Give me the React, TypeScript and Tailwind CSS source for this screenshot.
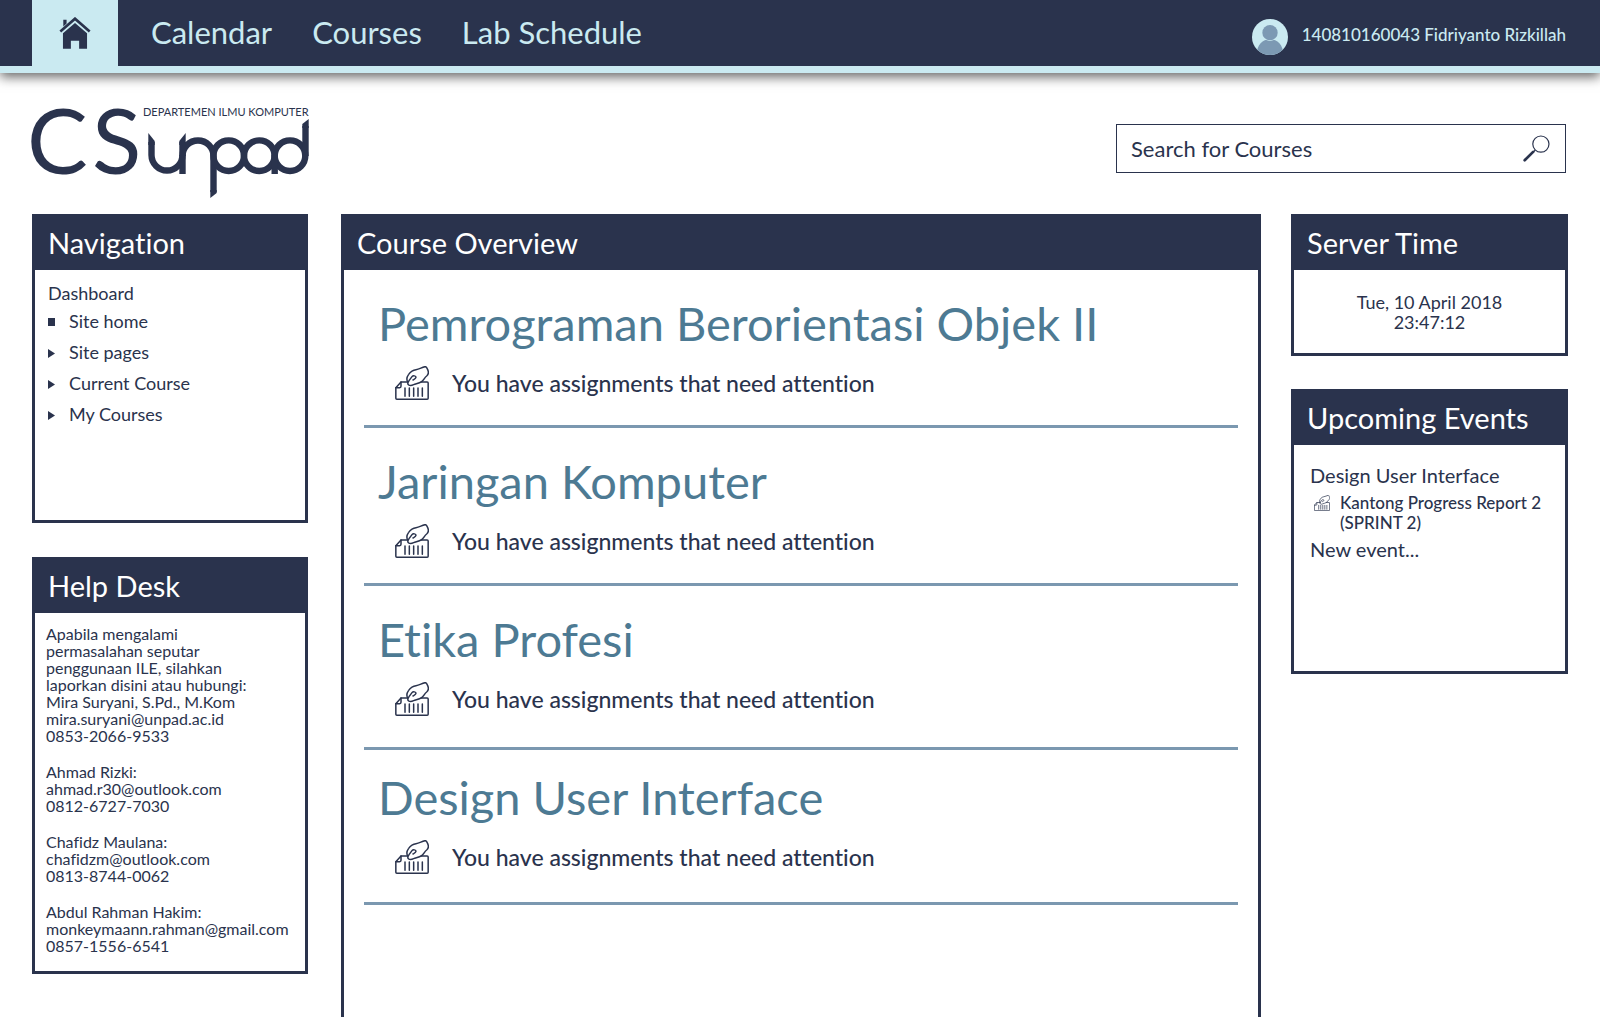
import React from "react";

type Children = { children: React.ReactNode };

const courses = [
  { name: "Pemrograman Berorientasi Objek II", spacing: "pt-[25px] pb-[25px]" },
  { name: "Jaringan Komputer", spacing: "pt-[25px] pb-[25px]" },
  { name: "Etika Profesi", spacing: "pt-[25px] pb-[31px]" },
  { name: "Design User Interface", spacing: "pt-[19px] pb-7" },
];

const contacts = [
  { name: "Ahmad Rizki:", email: "ahmad.r30@outlook.com", phone: "0812-6727-7030" },
  { name: "Chafidz Maulana:", email: "chafidzm@outlook.com", phone: "0813-8744-0062" },
  { name: "Abdul Rahman Hakim:", email: "monkeymaann.rahman@gmail.com", phone: "0857-1556-6541" },
];

function HomeIcon() {
  return (
    <svg viewBox="0 0 95 97" className="h-8 w-8" fill="currentColor" aria-hidden="true">
      <path d="M12 8h10v12l-10 9z" />
      <path d="M3 44 47.500 5 92 44" fill="none" stroke="currentColor" strokeWidth="8" />
      <path d="M11 96V49L47.500 18 84 49v47H60V72H35v24z" />
    </svg>
  );
}

function Avatar() {
  return (
    <svg viewBox="0 0 108 108" className="h-9 w-9" aria-hidden="true">
      <clipPath id="avatar-clip">
        <circle cx="54" cy="54" r="54" />
      </clipPath>
      <g clipPath="url(#avatar-clip)">
        <rect width="108" height="108" fill="#caeaf1" />
        <path d="M14 108C14 78 32 61 54 61s40 17 40 47z" fill="#7c99b3" />
        <circle cx="54" cy="41" r="25" fill="#caeaf1" />
        <circle cx="54" cy="41" r="23" fill="#7c99b3" />
      </g>
    </svg>
  );
}

function SearchIcon() {
  return (
    <svg viewBox="0 0 80 80" className="h-[27px] w-[27px]" fill="none" stroke="currentColor" aria-hidden="true">
      <circle cx="53" cy="27" r="24" strokeWidth="3.500" />
      <path d="M36 45 28 53" strokeWidth="4" />
      <path d="M30 50 5 75" strokeWidth="8" strokeLinecap="round" />
    </svg>
  );
}

function AssignmentIcon({ className }: { className: string }) {
  return (
    <svg
      viewBox="0 0 102 102"
      className={className}
      fill="none"
      stroke="currentColor"
      strokeWidth="4.500"
      strokeLinecap="round"
      strokeLinejoin="round"
      aria-hidden="true"
    >
      <path d="M38 48H18L2.500 65v32q0 2.500 3 2.500h91q3 0 3-3V51q0-3-3-3H79" />
      <path d="M18 48v13q0 4-4 4H2.500" />
      <path d="M30 66v25M43 66v25M56 66v25M69 66v25M82 66v25" />
      <path d="M39 50C34 42 35 33 41 25c5-7 13-13 22-14 10-1 17-7 27-9 5-1 6 4 8 9 4 9 2 15-3 19-7 5-8 12-15 17-8 6-17 6-24 9-6 3-11 4-15 1-4-3-3-8 1-13l9-12c3-4 12-3 12 2 0 4-5 6-9 8" />
    </svg>
  );
}

function Logo() {
  return (
    <svg
      viewBox="0 0 278 90"
      className="h-[90px] w-[278px] overflow-visible"
      role="img"
      aria-label="CS Unpad, Departemen Ilmu Komputer"
    >
      <g fill="#2a334d" fontFamily="Lato, sans-serif">
        <text x="-5" y="66" fontSize="91">C</text>
        <text x="60" y="66" fontSize="91">S</text>
        <text x="111" y="8" fontSize="11">DEPARTEMEN ILMU KOMPUTER</text>
      </g>
      <g fill="none" stroke="#2a334d" strokeWidth="6.400">
        <path d="M119.500 34v13a15.500 15.500 0 0 0 31 0" />
        <path d="M150.500 34v32" />
        <path d="M150.500 48a15.500 15.500 0 0 1 31 0v36" />
        <circle cx="196.700" cy="47.700" r="15.300" />
        <circle cx="227.300" cy="47.700" r="15.300" />
        <circle cx="258" cy="47.700" r="15.300" />
        <path d="M242.700 47v19" />
        <path d="M273.500 18v30" />
      </g>
      <g fill="#2a334d">
        <path d="M116.300 25l6.400 8v4h-6.400z" />
        <path d="M147.300 37v-4l6.400-8v12z" />
        <path d="M178.300 82h6.400v3l-6.400 5z" />
        <path d="M270.300 20v-4l6.400-5v9z" />
      </g>
    </svg>
  );
}

function Panel({ title, className = "", bodyClass, children }: Children & { title: string; className?: string; bodyClass: string }) {
  return (
    <section className={`flex flex-col ${className}`}>
      <h2 className="flex h-14 items-center bg-[#2a334d] px-4 text-[29px] leading-none text-white">{title}</h2>
      <div className={`flex-1 border-x-[3px] border-[#2a334d] ${bodyClass}`}>{children}</div>
    </section>
  );
}

function NavItem({ children, square = false }: Children & { square?: boolean }) {
  return (
    <li>
      <a href="#" className="flex items-center leading-[31px]">
        <svg viewBox="0 0 7 9" className="mt-0.5 mr-[14px] h-[9px] w-[7px]" fill="currentColor" aria-hidden="true">
          {square ? <path d="M0 0h7v8H0z" /> : <path d="M0 0 7 4.500 0 9z" />}
        </svg>
        {children}
      </a>
    </li>
  );
}

export default function App() {
  return (
    <div className="flex min-h-screen flex-col bg-white font-[Lato,sans-serif] text-[#2a334d] [font-variant-ligatures:no-common-ligatures]">
      <header className="border-b-[7px] border-[#caeaf1] bg-[#2a334d] px-8 text-[#caeaf1] shadow-[0_4px_11px_rgba(0,0,0,0.6)]">
        <div className="flex h-[66px] items-stretch">
          <a href="#" aria-label="Home" className="flex w-[86px] items-center justify-center bg-[#caeaf1] text-[#2a334d]">
            <HomeIcon />
          </a>
          <nav className="ml-[33px] flex items-center gap-10 pb-0.5 text-[31px] leading-none">
            <a href="#">Calendar</a>
            <a href="#">Courses</a>
            <a href="#">Lab Schedule</a>
          </nav>
          <a href="#" className="ml-auto flex items-center gap-[14px] pt-2 pr-0.5 text-[17px] font-medium">
            <Avatar />
            <span className="pb-1">140810160043 Fidriyanto Rizkillah</span>
          </a>
        </div>
      </header>

      <div className="flex h-[141px] items-start justify-between px-8 pt-[35px]">
        <Logo />
        <form className="mt-4 mr-0.5 flex h-[49px] w-[450px] items-center border border-[#2a334d]" onSubmit={(e) => e.preventDefault()}>
          <input
            type="search"
            aria-label="Search for Courses"
            placeholder="Search for Courses"
            className="h-full min-w-0 flex-1 pl-[14px] text-[22px] outline-none placeholder:text-[#2a334d]"
          />
          <button type="submit" aria-label="Search" className="mr-[15px]">
            <SearchIcon />
          </button>
        </form>
      </div>

      <main className="flex flex-1 items-stretch px-8">
        <div className="mr-[33px] w-[276px] shrink-0">
          <Panel title="Navigation" className="min-h-[309px]" bodyClass="border-b-[3px] px-[13px] pt-[11px] text-[18px]">
            <a href="#" className="block leading-6">Dashboard</a>
            <ul className="mt-px">
              <NavItem square>Site home</NavItem>
              <NavItem>Site pages</NavItem>
              <NavItem>Current Course</NavItem>
              <NavItem>My Courses</NavItem>
            </ul>
          </Panel>
          <Panel title="Help Desk" className="mt-[34px]" bodyClass="border-b-[3px] px-[11px] pt-3 pb-[17px] text-[16px] leading-[17px]">
            <p className="max-w-[210px]">Apabila mengalami permasalahan seputar penggunaan ILE, silahkan laporkan disini atau hubungi:</p>
            <p>Mira Suryani, S.Pd., M.Kom</p>
            <a href="mailto:mira.suryani@unpad.ac.id" className="block">mira.suryani@unpad.ac.id</a>
            <p>0853-2066-9533</p>
            {contacts.map((c) => (
              <div key={c.email} className="mt-[19px]">
                <p>{c.name}</p>
                <a href={`mailto:${c.email}`} className="block">{c.email}</a>
                <p>{c.phone}</p>
              </div>
            ))}
          </Panel>
        </div>

        <Panel title="Course Overview" className="min-w-0 flex-1" bodyClass="px-5">
          {courses.map((c) => (
            <article key={c.name} className={`border-b-[3px] border-[#7b98b0] ${c.spacing}`}>
              <h3 className="pl-[14px] text-[47px] leading-[56px] text-[#4d7a93]">
                <a href="#">{c.name}</a>
              </h3>
              <p className="mt-[15px] flex h-[34px] items-center pl-[31px] text-[23px] leading-none font-medium">
                <AssignmentIcon className="mr-[23px] h-[34px] w-[34px]" />
                You have assignments that need attention
              </p>
            </article>
          ))}
        </Panel>

        <div className="ml-[30px] w-[277px] shrink-0">
          <Panel title="Server Time" className="min-h-[142px]" bodyClass="border-b-[3px] pt-[22px] text-center text-[18px] leading-5">
            <p>Tue, 10 April 2018</p>
            <p>23:47:12</p>
          </Panel>
          <Panel title="Upcoming Events" className="mt-[33px] min-h-[285px]" bodyClass="border-b-[3px] pt-[18px] pl-4 text-[20px] leading-6">
            <p>Design User Interface</p>
            <a href="#" className="mt-1.5 mb-1 flex items-start pl-1 text-[17px] leading-5 font-medium">
              <AssignmentIcon className="mt-0.5 mr-[10px] h-4 w-4 shrink-0" />
              <span>Kantong Progress Report 2 (SPRINT 2)</span>
            </a>
            <a href="#">New event...</a>
          </Panel>
        </div>
      </main>
    </div>
  );
}
